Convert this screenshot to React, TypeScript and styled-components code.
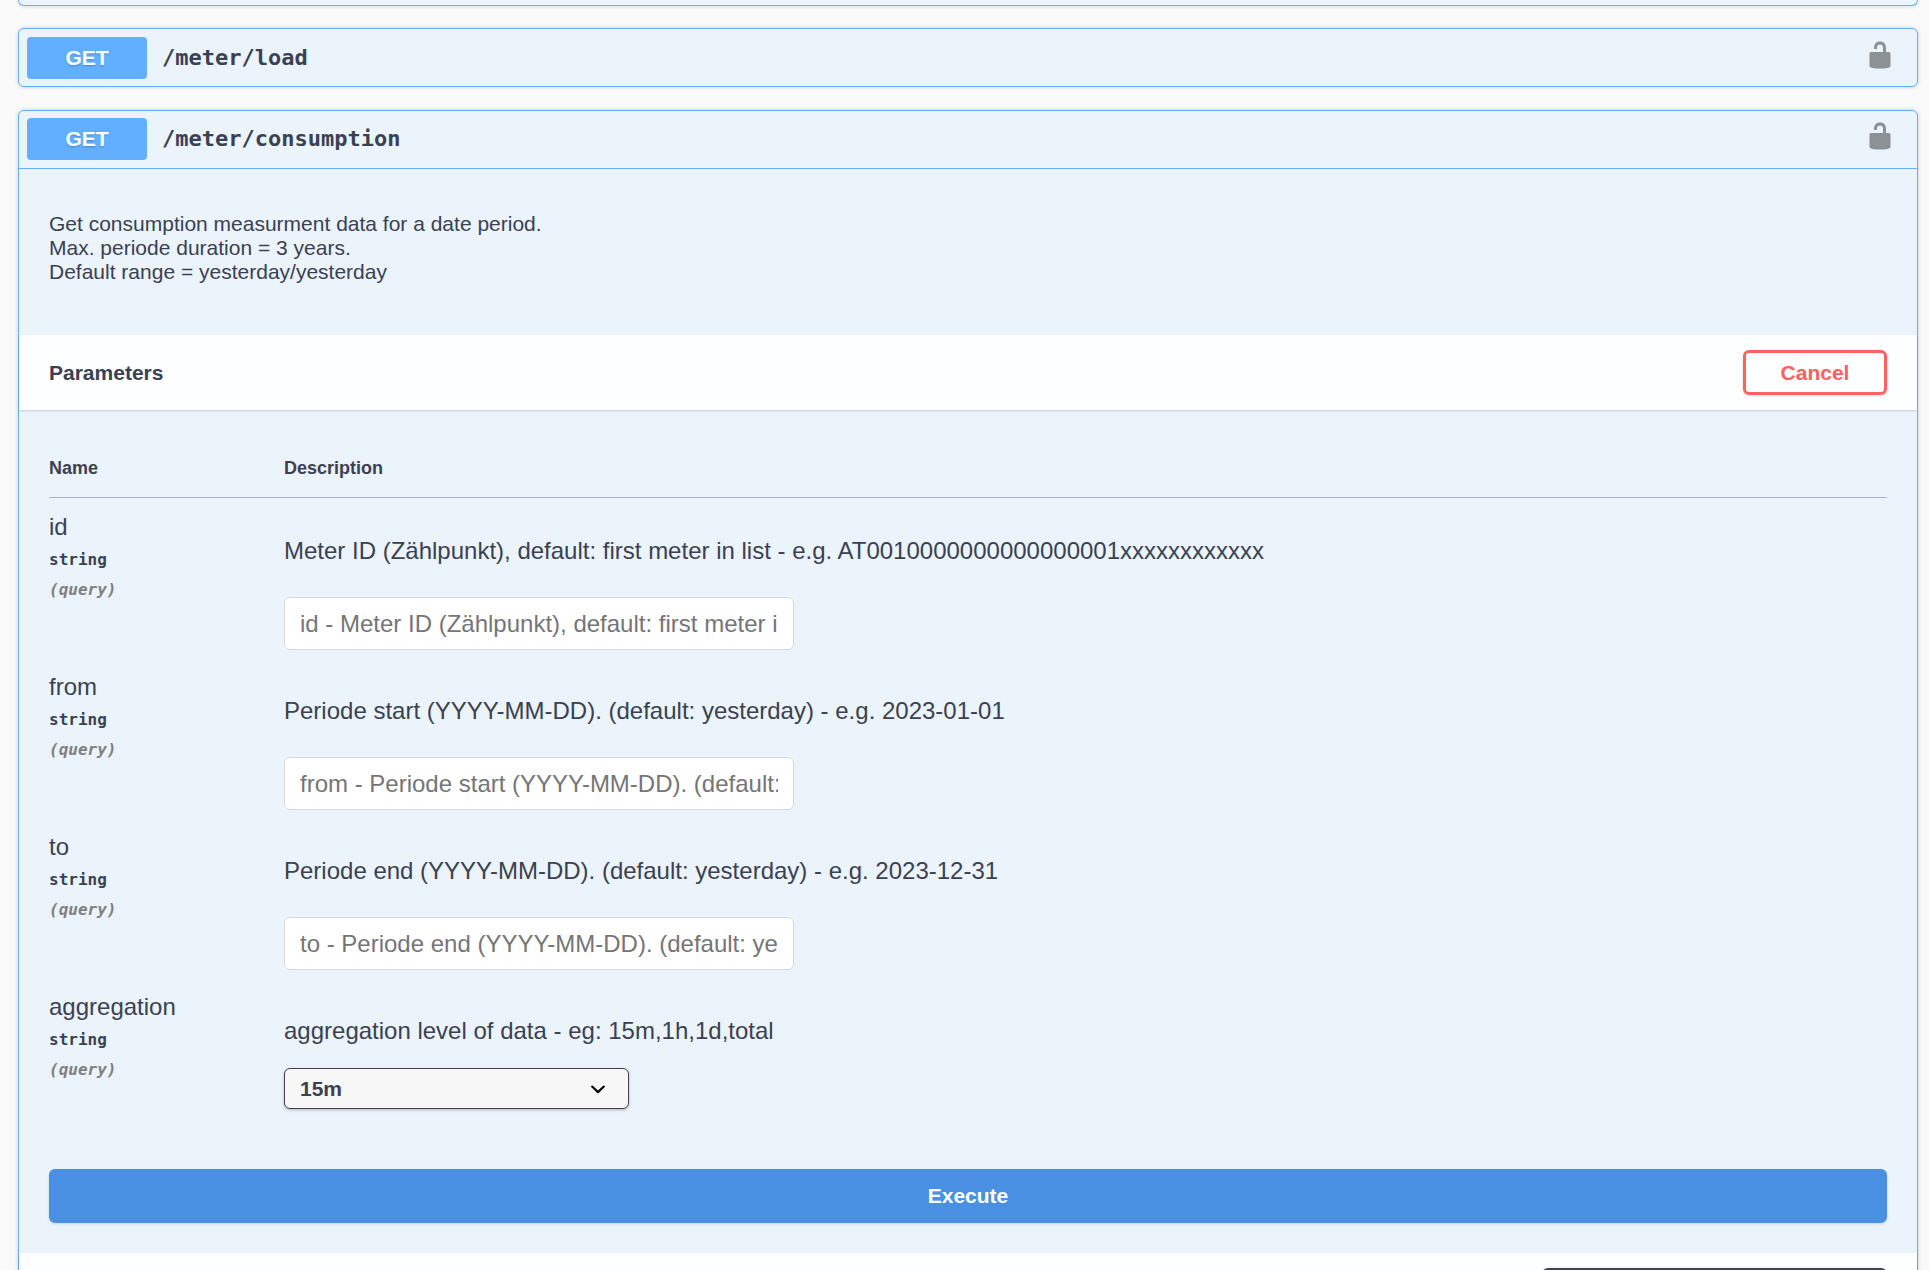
import React from "react";
import styled, { createGlobalStyle, css } from "styled-components";

const sans = `"Liberation Sans", Arial, sans-serif`;
const mono = `"DejaVu Sans Mono", Consolas, monospace`;
const ink = "#3b4151";
const blue = "#61affe";

const GlobalStyle = createGlobalStyle`
  *, *::before, *::after { box-sizing: border-box; }
  body {
    margin: 0;
    background: #fafafa;
    color: ${ink};
    font-family: ${sans};
  }
`;

const Page = styled.main`
  display: flex;
  flex-direction: column;
  gap: 23px;
  height: 100vh;
  padding: 0 11px 0 18px;
  overflow: hidden;
  > * { flex: none; }
`;

const Block = styled.section`
  background: #ebf3fb;
  border: 1px solid ${blue};
  border-radius: 6px;
  box-shadow: 0 0 4px rgba(0, 0, 0, 0.19);
`;

const PreviousBlock = styled(Block)`
  height: 6px;
  border-top: 0;
  border-radius: 0 0 6px 6px;
  margin-bottom: -1px;
`;

const Summary = styled.header<{ $open?: boolean }>`
  display: flex;
  align-items: center;
  gap: 15px;
  padding: 8px 22px 7px 8px;
  ${(p) => p.$open && css`
    padding-top: 7px;
    padding-bottom: 8px;
    border-bottom: 1px solid ${blue};
  `}
`;

const Method = styled.span`
  width: 120px;
  border-radius: 4px;
  background: ${blue};
  color: #fff;
  font-size: 21px;
  font-weight: 700;
  line-height: 42px;
  text-align: center;
  text-shadow: 0 1px 0 rgba(0, 0, 0, 0.1), 0 2px 1px rgba(0, 0, 0, 0.08);
`;

const Path = styled.h2`
  flex: 1;
  margin: 0;
  font-family: ${mono};
  font-size: 22px;
  font-weight: 700;
  line-height: 28px;
`;

const LockButton = styled.button`
  display: flex;
  padding: 0 0 6px;
  border: 0;
  background: none;
  color: #000;
  opacity: 0.4;
`;

const Description = styled.p`
  margin: 0;
  padding: 43px 30px 51px;
  font-size: 21px;
  line-height: 24px;
`;

const Band = styled.div<{ $end?: boolean }>`
  display: flex;
  align-items: center;
  justify-content: ${(p) => (p.$end ? "flex-end" : "space-between")};
  padding: 15px 30px;
  background: rgba(255, 255, 255, 0.85);
  box-shadow: 0 1px 2px rgba(0, 0, 0, 0.15);
`;

const BandTitle = styled.h3`
  margin: 0;
  font-size: 21px;
  font-weight: 700;
  line-height: 24px;
`;

const Button = styled.button`
  padding: 0 34px;
  border: 3px solid;
  border-radius: 6px;
  font-family: ${sans};
  font-size: 21px;
  font-weight: 700;
  box-shadow: 0 1px 3px rgba(0, 0, 0, 0.12);
`;

const CancelButton = styled(Button)`
  min-width: 144px;
  height: 45px;
  border-color: #ff6060;
  background: transparent;
  color: #ff6060;
`;

const ExecuteButton = styled(Button)`
  width: 100%;
  height: 54px;
  border-color: #4990e2;
  background: #4990e2;
  color: #fff;
`;

const Form = styled.form`
  padding: 30px;
`;

const Table = styled.table`
  width: 100%;
  margin-bottom: 60px;
  border-spacing: 0;
  table-layout: fixed;
`;

const HeadCell = styled.th<{ $name?: boolean }>`
  padding: 18px 0;
  border-bottom: 1px solid #a9b3c3;
  font-size: 18px;
  line-height: 21px;
  text-align: left;
  ${(p) => p.$name && css`width: 235px;`}
`;

const Cell = styled.td`
  padding: 15px 0 0;
  vertical-align: top;
`;

const ParamName = styled.label`
  display: block;
  font-size: 24px;
  line-height: 27px;
`;

const ParamMeta = styled.div<{ $location?: boolean }>`
  margin-top: 10px;
  font-family: ${mono};
  font-size: 16px;
  font-weight: 700;
  line-height: 20px;
  ${(p) => p.$location && css`
    color: #808080;
    font-style: italic;
  `}
`;

const ParamText = styled.p`
  margin: 24px 0;
  font-size: 24px;
  line-height: 27px;
`;

const TextInput = styled.input`
  display: block;
  width: 510px;
  max-width: 100%;
  height: 53px;
  margin: 33px 0 8px;
  padding: 0 15px;
  border: 1px solid #d9d9d9;
  border-radius: 6px;
  background: #fff;
  color: ${ink};
  font-family: ${sans};
  font-size: 24px;
  &::placeholder { color: #757575; }
`;

const SelectBox = styled.div`
  display: inline-grid;
  align-items: center;
  vertical-align: top;
  > * { grid-area: 1 / 1; }
  > svg {
    justify-self: end;
    margin-right: 16px;
    pointer-events: none;
  }
`;

const Select = styled.select<{ $strong?: boolean }>`
  appearance: none;
  width: 345px;
  height: 41px;
  padding: 0 60px 0 15px;
  border: ${(p) => (p.$strong ? 3 : 1)}px solid #41444e;
  border-radius: 6px;
  background: #f7f7f7;
  color: ${ink};
  font-family: ${sans};
  font-size: 21px;
  font-weight: 700;
  box-shadow: 0 1px 3px rgba(0, 0, 0, 0.25);
`;

function Unlocked() {
  return (
    <svg width="30" height="30" viewBox="0 0 20 20" fill="currentColor" aria-hidden="true">
      <path d="M15.8 8H14V5.6C14 2.703 12.665 1 10 1 7.334 1 6 2.703 6 5.6V6h2v-.801C8 3.754 8.797 3 10 3c1.203 0 2 .754 2 2.199V8H4c-.553 0-1 .646-1 1.199V17c0 .549.428 1.139.951 1.307l1.197.387C5.672 18.861 6.55 19 7.1 19h5.8c.549 0 1.428-.139 1.951-.307l1.196-.387c.524-.167.953-.757.953-1.306V9.199C17 8.646 16.352 8 15.8 8z" />
    </svg>
  );
}

function Chevron() {
  return (
    <svg width="30" height="30" viewBox="0 0 20 20" aria-hidden="true">
      <path d="M13.418 7.859a.695.695 0 0 1 .978 0 .68.68 0 0 1 0 .969l-3.908 3.83a.697.697 0 0 1-.979 0l-3.908-3.83a.68.68 0 0 1 0-.969.695.695 0 0 1 .978 0L10 11l3.418-3.141z" />
    </svg>
  );
}

function OperationSummary({ path, open }: { path: string; open?: boolean }) {
  return (
    <Summary $open={open}>
      <Method>GET</Method>
      <Path>{path}</Path>
      <LockButton type="button" aria-label="authorization button unlocked">
        <Unlocked />
      </LockButton>
    </Summary>
  );
}

type Param = { name: string; text: string; options?: string[] };

const params: Param[] = [
  { name: "id", text: "Meter ID (Zählpunkt), default: first meter in list - e.g. AT0010000000000000001xxxxxxxxxxxx" },
  { name: "from", text: "Periode start (YYYY-MM-DD). (default: yesterday) - e.g. 2023-01-01" },
  { name: "to", text: "Periode end (YYYY-MM-DD). (default: yesterday) - e.g. 2023-12-31" },
  { name: "aggregation", text: "aggregation level of data - eg: 15m,1h,1d,total", options: ["15m", "1h", "1d", "total"] },
];

function ParamRow({ name, text, options }: Param) {
  const id = `param-${name}`;
  return (
    <tr>
      <Cell>
        <ParamName htmlFor={id}>{name}</ParamName>
        <ParamMeta>string</ParamMeta>
        <ParamMeta $location>(query)</ParamMeta>
      </Cell>
      <Cell>
        <ParamText>{text}</ParamText>
        {options ? (
          <SelectBox>
            <Select id={id} defaultValue={options[0]}>
              {options.map((o) => (
                <option key={o}>{o}</option>
              ))}
            </Select>
            <Chevron />
          </SelectBox>
        ) : (
          <TextInput id={id} type="text" placeholder={`${name} - ${text}`} />
        )}
      </Cell>
    </tr>
  );
}

export default function App() {
  return (
    <>
      <GlobalStyle />
      <Page>
        <PreviousBlock />
        <Block>
          <OperationSummary path="/meter/load" />
        </Block>
        <Block>
          <OperationSummary path="/meter/consumption" open />
          <Description>
            Get consumption measurment data for a date period.
            <br />
            Max. periode duration = 3 years.
            <br />
            Default range = yesterday/yesterday
          </Description>
          <Band>
            <BandTitle>Parameters</BandTitle>
            <CancelButton type="button">Cancel</CancelButton>
          </Band>
          <Form onSubmit={(e) => e.preventDefault()}>
            <Table>
              <thead>
                <tr>
                  <HeadCell $name>Name</HeadCell>
                  <HeadCell>Description</HeadCell>
                </tr>
              </thead>
              <tbody>
                {params.map((p) => (
                  <ParamRow key={p.name} {...p} />
                ))}
              </tbody>
            </Table>
            <ExecuteButton type="submit">Execute</ExecuteButton>
          </Form>
          <Band $end>
            <SelectBox>
              <Select $strong aria-label="Response content type" />
            </SelectBox>
          </Band>
        </Block>
      </Page>
    </>
  );
}
